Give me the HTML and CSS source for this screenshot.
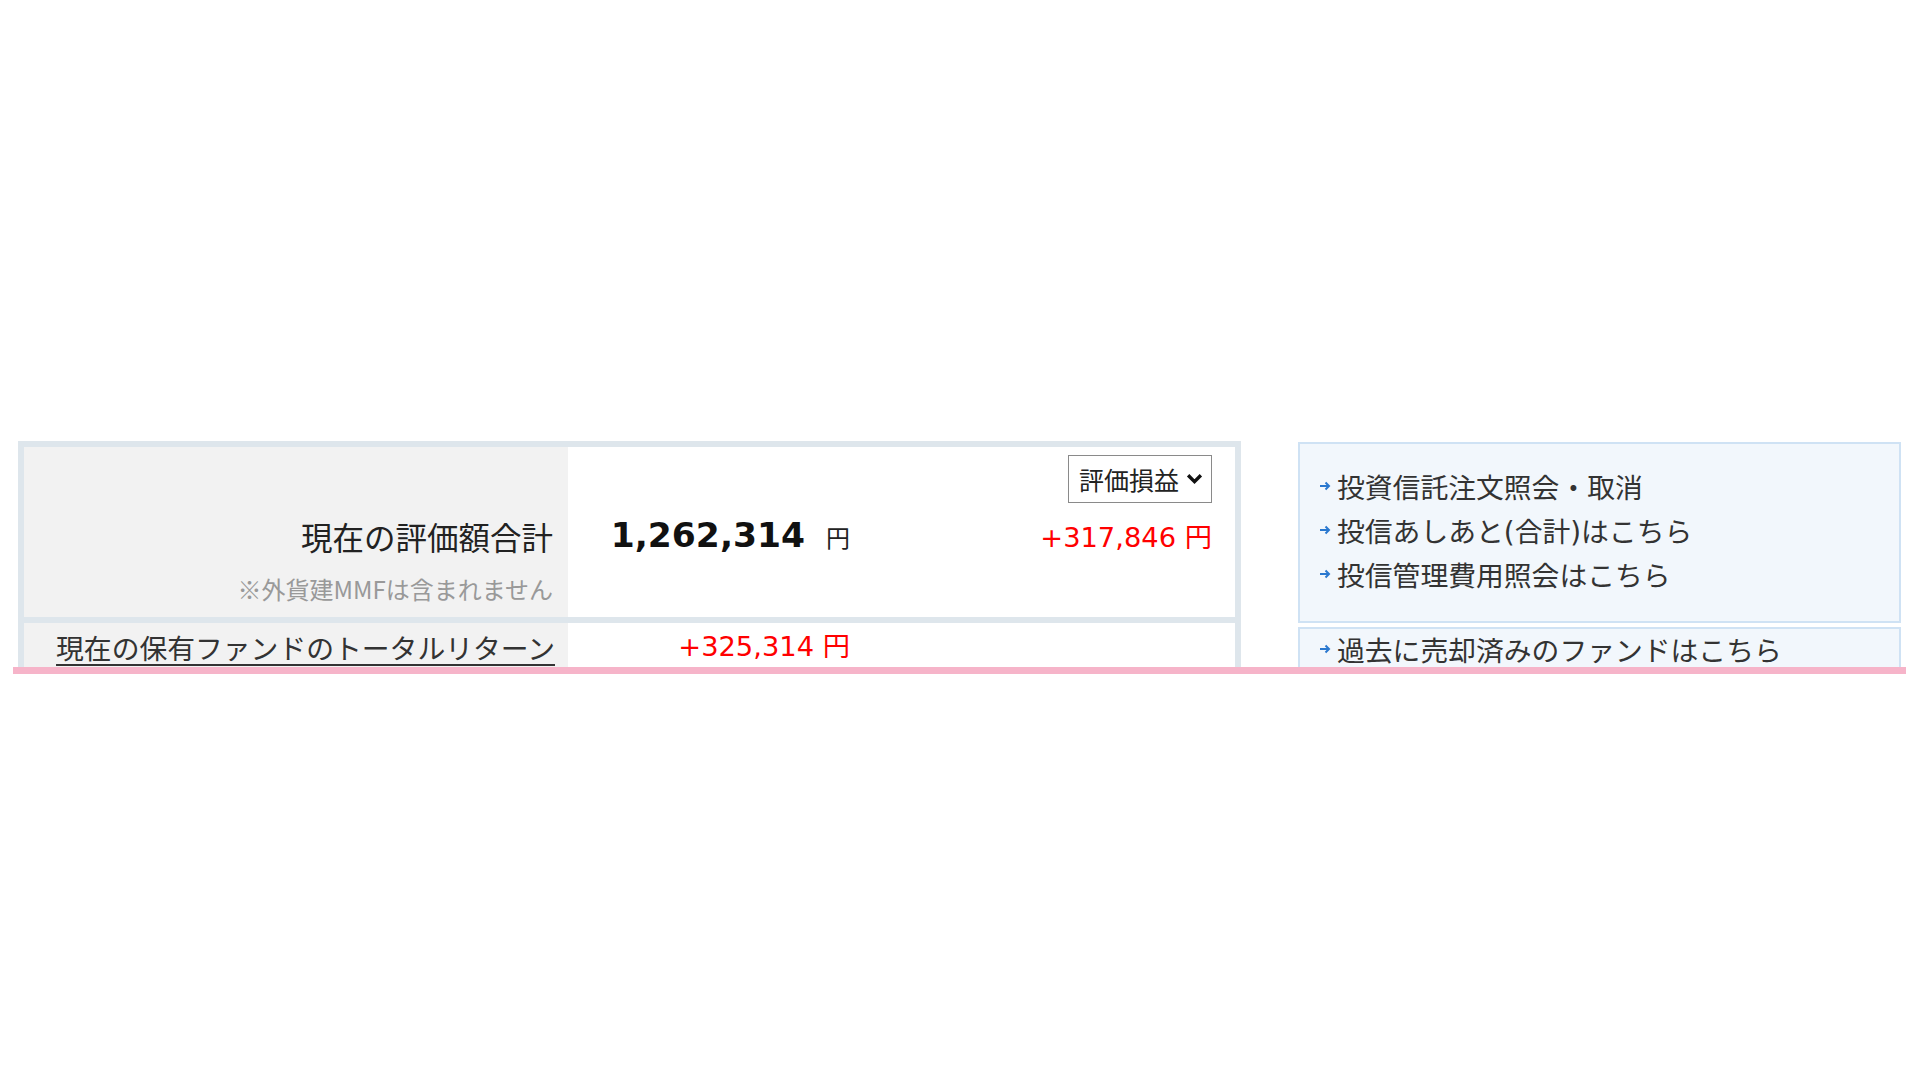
FILE: index.html
```html
<!DOCTYPE html>
<html lang="ja">
<head>
    <meta charset="UTF-8">
    <title>投資信託 保有残高</title>
    <link rel="stylesheet" href="styles.css">
</head>
<body>
    <div class="page">
        <div class="summary">
            <!-- 評価額合計 -->
            <div class="summary-row row-total">
                <div class="label-cell">
                    <div class="label-main">現在の評価額合計</div>
                    <div class="label-note">※外貨建MMFは含まれません</div>
                </div>
                <div class="value-cell">
                    <div class="value-top">
                        <div class="fake-select">
                            評価損益
                            <svg class="chevron" viewBox="0 0 16 11" width="17" height="12"><polyline points="2,2 8,8 14,2" fill="none" stroke="#111" stroke-width="3.2"/></svg>
                        </div>
                    </div>
                    <div class="value-line">
                        <div class="amount"><span class="amount-num">1,262,314</span><span class="yen">円</span></div>
                        <div class="profit">+317,846 円</div>
                    </div>
                </div>
            </div>
            <!-- トータルリターン -->
            <div class="summary-row row-return">
                <div class="label-cell">
                    <a href="#" class="return-link">現在の保有ファンドのトータルリターン</a>
                </div>
                <div class="value-cell">
                    <div class="value-line">
                        <div class="amount profit-col">+325,314 円</div>
                    </div>
                </div>
            </div>
        </div>

        <div class="side-links">
            <ul class="link-box box-main">
                <li><svg class="arrow" viewBox="0 0 12 12" width="12" height="12"><path d="M1 6H10M6.5 2.5L10 6L6.5 9.5" fill="none" stroke="#2a78cf" stroke-width="2"/></svg><a href="#">投資信託注文照会・取消</a></li>
                <li><svg class="arrow" viewBox="0 0 12 12" width="12" height="12"><path d="M1 6H10M6.5 2.5L10 6L6.5 9.5" fill="none" stroke="#2a78cf" stroke-width="2"/></svg><a href="#">投信あしあと(合計)はこちら</a></li>
                <li><svg class="arrow" viewBox="0 0 12 12" width="12" height="12"><path d="M1 6H10M6.5 2.5L10 6L6.5 9.5" fill="none" stroke="#2a78cf" stroke-width="2"/></svg><a href="#">投信管理費用照会はこちら</a></li>
            </ul>
            <ul class="link-box box-sub">
                <li><svg class="arrow" viewBox="0 0 12 12" width="12" height="12"><path d="M1 6H10M6.5 2.5L10 6L6.5 9.5" fill="none" stroke="#2a78cf" stroke-width="2"/></svg><a href="#">過去に売却済みのファンドはこちら</a></li>
            </ul>
        </div>
    </div>
    <div class="pink-bar"></div>
</body>
</html>
```

FILE: styles.css
```css
* {
    margin: 0;
    padding: 0;
    box-sizing: border-box;
}

body {
    font-family: "DejaVu Sans", "Noto Sans CJK JP", sans-serif;
    background: #fff;
    color: #222;
}

a {
    color: inherit;
    text-decoration: none;
}

.page {
    display: flex;
    align-items: flex-start;
    gap: 57px;
    height: 667px;
    overflow: hidden;
    padding: 441px 0 0 18px;
}

/* 左側の評価額テーブル */
.summary {
    width: 1223px;
    background: #dee6ec;
    padding: 6px;
    display: flex;
    flex-direction: column;
    gap: 6px;
}

.summary-row {
    display: flex;
}

.row-total {
    height: 170px;
}

.row-return {
    height: 80px;
}

.label-cell {
    width: 544px;
    background: #f2f2f2;
    text-align: right;
    padding-right: 15px;
}

.value-cell {
    flex: 1;
    background: #fff;
}

.label-main {
    font-family: "Noto Sans CJK JP", sans-serif;
    font-size: 31.5px;
    line-height: 40px;
    margin-top: 69px;
}

.label-note {
    font-family: "Noto Sans CJK JP", sans-serif;
    font-size: 24px;
    line-height: 34px;
    margin-top: 16px;
    color: #999;
}

.value-top {
    display: flex;
    justify-content: flex-end;
    padding: 8px 23px 0 0;
}

.fake-select {
    display: flex;
    align-items: center;
    gap: 7px;
    height: 48px;
    padding: 0 8px 0 10px;
    border: 1.5px solid #8a8a8a;
    font-family: "Noto Sans CJK JP", sans-serif;
    font-size: 25px;
    color: #222;
    background: #fff;
}

.value-line {
    display: flex;
    align-items: baseline;
    height: 40px;
    line-height: 40px;
    margin-top: 12px;
}

.amount {
    width: 302px;
    text-align: right;
    padding-right: 20px;
}

.amount-num {
    font-size: 34.5px;
    font-weight: bold;
    color: #111;
}

.yen {
    font-family: "Noto Sans CJK JP", sans-serif;
    font-size: 24px;
    margin-left: 21px;
}

.profit {
    flex: 1;
    text-align: right;
    padding-right: 23px;
    color: #f00;
    font-size: 27.3px;
}

.row-return .label-cell {
    padding-right: 13px;
}

.row-return .value-line {
    margin-top: 4px;
}

.return-link {
    display: inline-block;
    font-family: "Noto Sans CJK JP", sans-serif;
    font-size: 27.8px;
    line-height: 40px;
    margin-top: 4px;
    text-decoration: underline;
    text-underline-offset: 5px;
    color: #333;
}

.profit-col {
    color: #f00;
    font-size: 27.3px;
}

/* 右側のリンク */
.side-links {
    width: 603px;
    display: flex;
    flex-direction: column;
    gap: 4px;
    margin-top: 1px;
}

.link-box {
    list-style: none;
    background: #f2f7fc;
    border: 2px solid #cfe2f4;
    padding-left: 19px;
}

.box-main {
    height: 181px;
    padding-top: 20px;
}

.box-sub {
    height: 80px;
}

.link-box li {
    display: flex;
    align-items: center;
    height: 44px;
    font-family: "DejaVu Sans", "Noto Sans CJK JP", sans-serif;
    font-size: 27.8px;
    color: #333;
}

.box-sub li {
    height: 39px;
}

.arrow {
    margin-right: 6px;
    flex-shrink: 0;
}

.pink-bar {
    height: 7px;
    margin: 0 14px 0 13px;
    background: #f6b4c9;
}
```
